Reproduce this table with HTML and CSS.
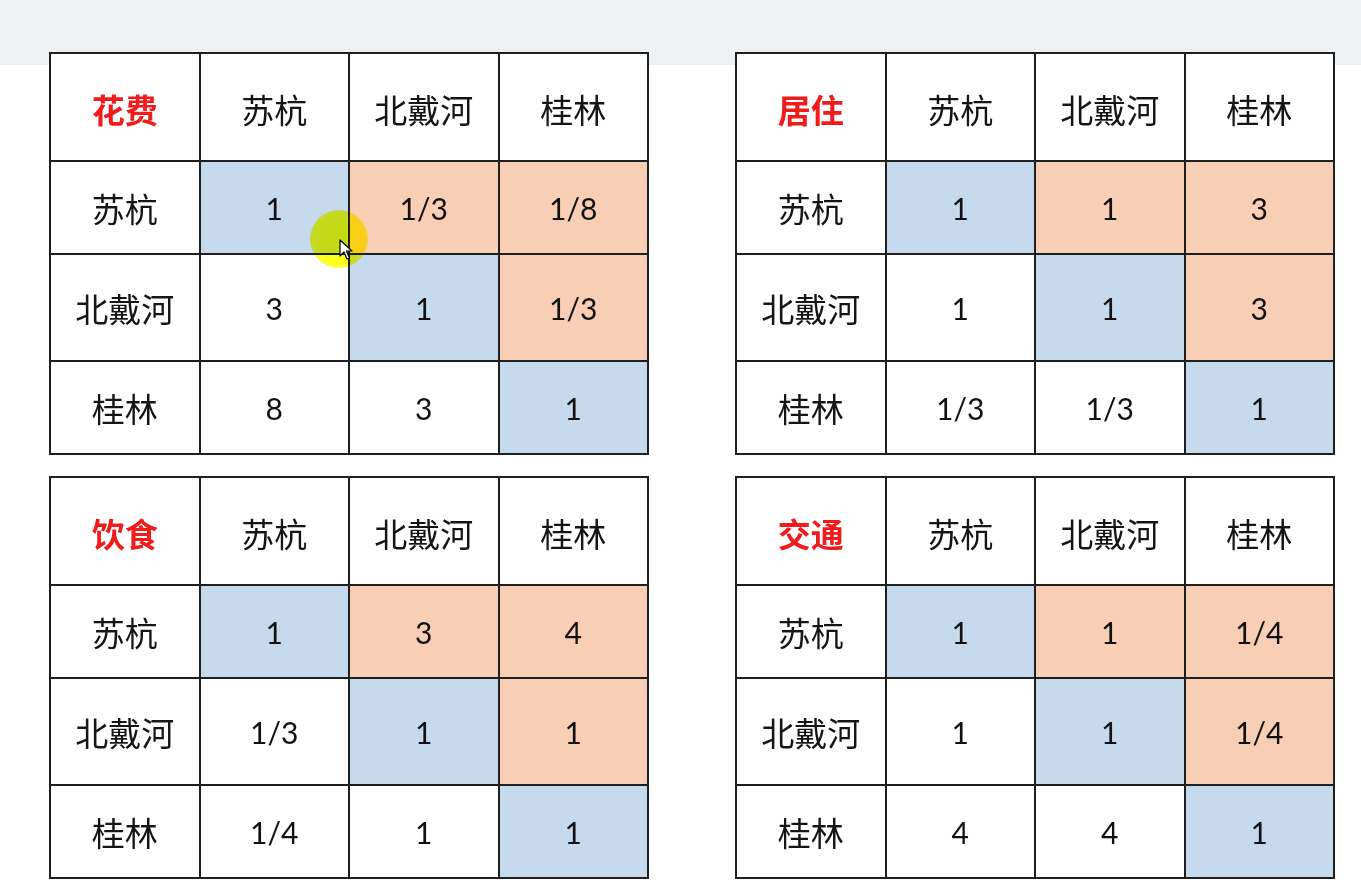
FILE: index.html
```html
<!DOCTYPE html>
<html lang="zh">
<head>
<meta charset="utf-8">
<title>比较矩阵</title>
<link rel="stylesheet" href="styles.css">
</head>
<body>
<div class="board">
  <table class="matrix">
    <tr class="head"><th class="title">花费</th><th>苏杭</th><th>北戴河</th><th>桂林</th></tr>
    <tr class="short"><th>苏杭</th><td class="diag">1</td><td class="up">1/3</td><td class="up">1/8</td></tr>
    <tr class="tall"><th>北戴河</th><td>3</td><td class="diag">1</td><td class="up">1/3</td></tr>
    <tr class="short"><th>桂林</th><td>8</td><td>3</td><td class="diag">1</td></tr>
  </table>
  <table class="matrix">
    <tr class="head"><th class="title">居住</th><th>苏杭</th><th>北戴河</th><th>桂林</th></tr>
    <tr class="short"><th>苏杭</th><td class="diag">1</td><td class="up">1</td><td class="up">3</td></tr>
    <tr class="tall"><th>北戴河</th><td>1</td><td class="diag">1</td><td class="up">3</td></tr>
    <tr class="short"><th>桂林</th><td>1/3</td><td>1/3</td><td class="diag">1</td></tr>
  </table>
  <table class="matrix">
    <tr class="head"><th class="title">饮食</th><th>苏杭</th><th>北戴河</th><th>桂林</th></tr>
    <tr class="short"><th>苏杭</th><td class="diag">1</td><td class="up">3</td><td class="up">4</td></tr>
    <tr class="tall"><th>北戴河</th><td>1/3</td><td class="diag">1</td><td class="up">1</td></tr>
    <tr class="short"><th>桂林</th><td>1/4</td><td>1</td><td class="diag">1</td></tr>
  </table>
  <table class="matrix">
    <tr class="head"><th class="title">交通</th><th>苏杭</th><th>北戴河</th><th>桂林</th></tr>
    <tr class="short"><th>苏杭</th><td class="diag">1</td><td class="up">1</td><td class="up">1/4</td></tr>
    <tr class="tall"><th>北戴河</th><td>1</td><td class="diag">1</td><td class="up">1/4</td></tr>
    <tr class="short"><th>桂林</th><td>4</td><td>4</td><td class="diag">1</td></tr>
  </table>
</div>
<div class="spot"></div>
<svg class="pointer" width="14" height="22" viewBox="0 0 14 22">
  <path d="M1 1 L1 17 L5 13 L8 20 L10.5 19 L7.5 12 L13 12 Z" fill="#fff" stroke="#000" stroke-width="1.2" stroke-linejoin="round"/>
</svg>
</body>
</html>
```
FILE: styles.css
```css
html, body {
  margin: 0;
  padding: 0;
}
body {
  position: relative;
  width: 1361px;
  height: 891px;
  overflow: hidden;
  background: linear-gradient(#eef1f3 0, #eef1f3 65px, #ffffff 65px);
  font-family: "Noto Sans CJK SC", "Noto Sans", sans-serif;
  color: #151515;
}
.board {
  display: grid;
  grid-template-columns: 600px 600px;
  column-gap: 86px;
  row-gap: 21px;
  padding: 52px 0 0 49px;
}
.matrix {
  border-collapse: collapse;
  table-layout: fixed;
  width: 600px;
  border: 2px solid #1f1f1f;
}
.matrix th, .matrix td {
  border: 2px solid #1f1f1f;
  text-align: center;
  vertical-align: middle;
  padding: 0;
  background: #fff;
}
.matrix th {
  font-weight: normal;
  font-size: 33px;
}
.matrix .head th {
  padding-top: 3px;
}
.matrix th.title {
  color: #f21b1b;
  font-weight: bold;
}
.matrix td {
  font-family: "Lato", "Noto Sans CJK SC", sans-serif;
  font-size: 30px;
  color: #111;
}
.head { height: 108px; }
.short { height: 93px; }
.tall { height: 107px; }
.matrix td.diag { background: #c5daed; }
.matrix td.up { background: #f8cfb5; }
.spot {
  position: absolute;
  left: 310px;
  top: 210px;
  width: 58px;
  height: 58px;
  border-radius: 50%;
  background: radial-gradient(circle, #ffff10 0, #ffff20 60%, rgba(255,255,40,0.85) 75%, rgba(255,255,80,0) 100%);
  mix-blend-mode: multiply;
}
.pointer {
  position: absolute;
  left: 339px;
  top: 239px;
}
```
